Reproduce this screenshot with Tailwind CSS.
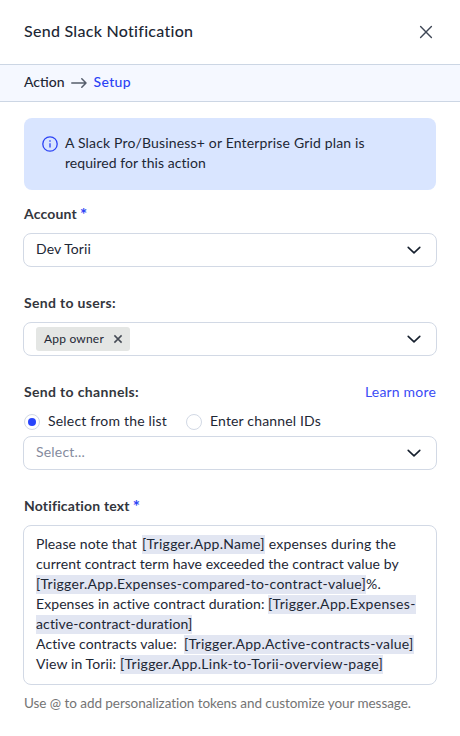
<!DOCTYPE html>
<html lang="en">
<head>
<meta charset="utf-8">
<title>Send Slack Notification</title>
<script src="https://cdn.jsdelivr.net/npm/@tailwindcss/browser@4"></script>
</head>
<body class="bg-white">
<main class="w-[460px] h-[736px] overflow-hidden bg-white font-['Lato','Open_Sans',sans-serif] text-[14px] leading-5 text-[#1d2735]">
  <header class="h-16 px-6 flex items-center justify-between">
    <h1 class="text-[16px] leading-6 pb-[2px] font-medium tracking-[0.28px]">Send Slack Notification</h1>
    <svg class="w-5 h-5" viewBox="0 0 20 20" fill="none" stroke="#3f4756" stroke-width="1.4" stroke-linecap="round"><path d="M4.6 4.6 15.4 15.4M15.4 4.6 4.6 15.4"/></svg>
  </header>
  <nav class="h-[38px] px-6 flex items-center border-y border-[#ccd6e4] bg-[#f5f8ff] font-medium">
    <span class="w-[41px] pb-[2px] whitespace-nowrap">Action</span>
    <svg class="ml-[6px] w-4 h-3" viewBox="0 0 16 12" fill="none" stroke="#555d6b" stroke-width="1.5" stroke-linecap="round" stroke-linejoin="round"><path d="M.8 6h14.2M10.8 1.8 15 6l-4.2 4.2"/></svg>
    <span class="ml-[6.5px] pb-[2px] text-[#2c43f5] tracking-[0.35px]">Setup</span>
  </nav>
  <div class="px-[23px] pt-4">
    <section class="mx-px h-[72px] rounded-lg bg-[#d9e5ff] pl-[18px] pt-[15px] flex">
      <svg class="w-4 h-4 mt-[3px] shrink-0" viewBox="0 0 16 16" fill="none" stroke="#2c43f5" stroke-width="1.3"><circle cx="8" cy="8" r="7.2"/><path d="M8 7.2v4.3M8 4.2v1.5"/></svg>
      <p class="ml-[7px] whitespace-nowrap"><span class="tracking-[0.165px]">A Slack Pro/Business+ or Enterprise Grid plan is</span><br><span class="tracking-[0.06px]">required for this action</span></p>
    </section>

    <div class="mt-[14px] ml-px flex font-bold text-[#33363d] tracking-[0.18px]">Account<span class="ml-[3px] text-[17px] leading-[22px] h-5 text-[#2c43f5]">*</span></div>
    <div class="mt-[9px] h-[34px] rounded-lg border border-[#d2d9e5] pl-3 pr-[14px] flex items-center justify-between">
      <span class="pb-[2px] tracking-[0.08px]">Dev Torii</span>
      <svg class="w-4 h-4" viewBox="0 0 16 16" fill="none" stroke="#16202e" stroke-width="1.6" stroke-linecap="round" stroke-linejoin="round"><path d="M2.2 5.4 8 10.8l5.8-5.4"/></svg>
    </div>

    <div class="mt-[26px] ml-px font-bold text-[#33363d] tracking-[0.32px]">Send to users:</div>
    <div class="mt-[9px] h-[34px] rounded-lg border border-[#d2d9e5] pl-3 pr-[14px] flex items-center justify-between">
      <span class="w-[94px] h-6 rounded-[3px] bg-[#e4e6e4] pl-2 pr-[7px] flex items-center justify-between text-[12px] tracking-[0.2px]">App owner
        <svg class="w-[10px] h-[10px]" viewBox="0 0 10 10" fill="none" stroke="#454b55" stroke-width="1.5"><path d="M1.4 1.4 8.6 8.6M8.6 1.4 1.4 8.6"/></svg>
      </span>
      <svg class="w-4 h-4" viewBox="0 0 16 16" fill="none" stroke="#16202e" stroke-width="1.6" stroke-linecap="round" stroke-linejoin="round"><path d="M2.2 5.4 8 10.8l5.8-5.4"/></svg>
    </div>

    <div class="mt-[26px] mx-px flex justify-between">
      <span class="font-bold text-[#33363d] tracking-[0.34px]">Send to channels:</span>
      <a class="text-[#3a4cf5] tracking-[0.18px]">Learn more</a>
    </div>
    <div class="mt-[9px] ml-px flex items-center h-5">
      <span class="w-4 h-4 mt-[2px] rounded-full border border-[#d2d9e5] flex items-center justify-center"><span class="w-2 h-2 rounded-full bg-[#2945fb]"></span></span>
      <span class="ml-2 w-[138px] tracking-[0.188px]">Select from the list</span>
      <span class="w-4 h-4 mt-[2px] rounded-full border border-[#d2d9e5]"></span>
      <span class="ml-2 tracking-[0.16px]">Enter channel IDs</span>
    </div>
    <div class="mt-[5px] h-[34px] rounded-lg border border-[#d2d9e5] pl-3 pr-[14px] flex items-center justify-between">
      <span class="pb-[2px] text-[#858b9e] tracking-[0.2px]">Select...</span>
      <svg class="w-4 h-4" viewBox="0 0 16 16" fill="none" stroke="#16202e" stroke-width="1.6" stroke-linecap="round" stroke-linejoin="round"><path d="M2.2 5.4 8 10.8l5.8-5.4"/></svg>
    </div>

    <div class="mt-[26px] ml-px flex font-bold text-[#33363d] tracking-[0.175px]">Notification text<span class="ml-[3px] text-[17px] leading-[22px] h-5 text-[#2c43f5]">*</span></div>
    <div class="mt-[9px] h-[160px] rounded-lg border border-[#d2d9e5] pl-3 pt-[9px] leading-[18px]">
      <div class="flex h-5 whitespace-pre"><span class="w-[106px] tracking-[0.1px]">Please note that </span><span class="w-[123px] h-[19px] bg-[#e2e6f2] tracking-[0.286px]">[Trigger.App.Name]</span><span class="tracking-[0.2px]"> expenses during the</span></div>
      <div class="h-5 whitespace-pre tracking-[0.071px]">current contract term have exceeded the contract value by</div>
      <div class="flex h-5 whitespace-pre"><span class="w-[330px] h-[19px] bg-[#e2e6f2] tracking-[0.265px]">[Trigger.App.Expenses-compared-to-contract-value]</span><span class="tracking-[0.2px]">%.</span></div>
      <div class="flex h-5 whitespace-pre"><span class="w-[232px] tracking-[0.079px]">Expenses in active contract duration: </span><span class="w-[148px] h-[19px] bg-[#e2e6f2] tracking-[0.33px]">[Trigger.App.Expenses-</span></div>
      <div class="flex h-5 whitespace-pre"><span class="w-[156px] h-[19px] bg-[#e2e6f2] tracking-[0.13px]">active-contract-duration]</span></div>
      <div class="flex h-5 whitespace-pre"><span class="w-[148px] tracking-[0.1px]">Active contracts value:  </span><span class="w-[230px] h-[19px] bg-[#e2e6f2] tracking-[0.265px]">[Trigger.App.Active-contracts-value]</span></div>
      <div class="flex h-5 whitespace-pre"><span class="w-[84px] tracking-[0.1px]">View in Torii: </span><span class="w-[263px] h-[19px] bg-[#e2e6f2] tracking-[0.286px]">[Trigger.App.Link-to-Torii-overview-page]</span></div>
    </div>
    <p class="mt-2 ml-px text-[13.5px] whitespace-nowrap text-[#747474] tracking-[-0.05px]">Use @ to add personalization tokens and customize your message.</p>
  </div>
</main>
</body>
</html>
